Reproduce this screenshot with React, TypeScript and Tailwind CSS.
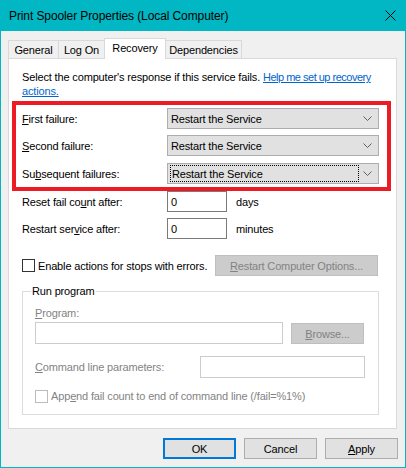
import React from "react";

const U = ({ children }: { children: React.ReactNode }) => (
  <span className="underline underline-offset-[1px]">{children}</span>
);

const Chevron = () => (
  <svg width="9" height="5" viewBox="0 0 9 5" className="shrink-0">
    <path d="M0.5 0.5 L4.5 4.5 L8.5 0.5" fill="none" stroke="#5f5f5f" strokeWidth="1" />
  </svg>
);

const Combo = ({ focused }: { focused?: boolean }) => (
  <div className="w-[212px] h-[21px] bg-[#e1e1e1] border border-[#adadad] flex items-center justify-between pr-[6px]">
    {focused ? (
      <div className="ml-[2px] w-[189px] h-[17px] border border-dotted border-black flex items-center pl-[1px]">
        Restart the Service
      </div>
    ) : (
      <div className="pl-[3px]">Restart the Service</div>
    )}
    <Chevron />
  </div>
);

const Tab = ({ label, w, selected, first }: { label: string; w: string; selected?: boolean; first?: boolean }) => (
  <div
    className={
      (selected
        ? "relative z-10 h-[21px] -mb-px bg-white pt-[2px] "
        : "h-[18px] bg-[#f0f0f0] pt-[2px] ") +
      (first ? "" : "-ml-px ") +
      "border-t border-l border-r border-[#d9d9d9] flex justify-center " +
      w
    }
  >
    {label}
  </div>
);

const Btn = ({ children, primary }: { children: React.ReactNode; primary?: boolean }) => (
  <div
    className={
      "w-[73px] h-[21px] bg-[#e1e1e1] flex items-center justify-center " +
      (primary ? "border-2 border-[#0078d7]" : "border border-[#adadad]")
    }
  >
    {children}
  </div>
);

export default function App() {
  return (
    <div className="w-[406px] h-[468px] bg-[#f0f0f0] border-x border-b border-[#00b7c3] font-['Liberation_Sans',Arial,sans-serif] text-[11px] leading-[14px] tracking-[-0.15px] text-black flex flex-col">
      <div className="h-[31px] shrink-0 bg-[#00b7c3] flex items-center justify-between pl-[8px] pr-[9px] text-[12px] tracking-[-0.1px]">
        <span>Print Spooler Properties (Local Computer)</span>
        <svg width="11" height="11" viewBox="0 0 11 11">
          <path d="M0.5 0.5 L10.5 10.5 M10.5 0.5 L0.5 10.5" stroke="#000" strokeWidth="1" />
        </svg>
      </div>

      <div className="h-[27px] shrink-0 flex items-end pl-[7px]">
        <Tab label="General" w="w-[51px]" first />
        <Tab label="Log On" w="w-[47px]" />
        <Tab label="Recovery" w="w-[62px]" selected />
        <Tab label="Dependencies" w="w-[77px]" />
      </div>

      <div className="ml-[7px] w-[389px] h-[371px] shrink-0 bg-white border border-[#d9d9d9] flex flex-col">
        <div className="pl-[13px] pt-[11px]">
          Select the computer's response if this service fails.{" "}
          <span className="text-[#0066cc] underline underline-offset-[1px] tracking-[-0.5px]">Help me set up recovery</span>
          <br />
          <span className="text-[#0066cc] underline underline-offset-[1px]">actions.</span>
        </div>

        <div className="mt-[3px] ml-[3px] w-[379px] border-4 border-[#ed1c24] pt-[3px] pb-[3px] pl-[6px] flex flex-col gap-[6px]">
          <div className="flex items-center">
            <div className="w-[145px]">
              <U>F</U>irst failure:
            </div>
            <Combo />
          </div>
          <div className="flex items-center">
            <div className="w-[145px]">
              <U>S</U>econd failure:
            </div>
            <Combo />
          </div>
          <div className="flex items-center mt-px">
            <div className="w-[145px]">
              Su<U>b</U>sequent failures:
            </div>
            <Combo focused />
          </div>
        </div>

        <div className="pl-[13px] flex items-center">
          <div className="w-[145px]">
            Reset fail co<U>u</U>nt after:
          </div>
          <div className="w-[60px] h-[21px] border border-[#7a7a7a] flex items-center pl-[3px]">0</div>
          <div className="ml-[9px]">days</div>
        </div>
        <div className="mt-[6px] pl-[13px] flex items-center">
          <div className="w-[145px]">
            Restart ser<U>v</U>ice after:
          </div>
          <div className="w-[60px] h-[21px] border border-[#7a7a7a] flex items-center pl-[3px]">0</div>
          <div className="ml-[9px]">minutes</div>
        </div>

        <div className="mt-[16px] pl-[13px] pr-[18px] flex items-center">
          <div className="w-[13px] h-[13px] border border-[#333333] bg-white" />
          <div className="ml-[3px]">Enable actions for stops with errors.</div>
          <div className="ml-auto w-[163px] h-[21px] bg-[#cccccc] border border-[#bfbfbf] text-[#838383] flex items-center justify-center">
            <span>
              <U>R</U>estart Computer Options...
            </span>
          </div>
        </div>

        <div className="relative mt-[15px] ml-[13px] w-[357px] border border-[#dcdcdc] pl-[12px] pt-[14px] pb-[11px]">
          <div className="absolute -top-[8px] left-[8px] bg-white px-px">Run program</div>
          <div className="text-[#838383]">
            <U>P</U>rogram:
          </div>
          <div className="mt-[2px] flex items-start">
            <div className="w-[248px] h-[22px] border border-[#cccccc] bg-white" />
            <div className="ml-[8px] mt-px w-[73px] h-[21px] bg-[#cccccc] border border-[#bfbfbf] text-[#838383] flex items-center justify-center">
              <span>
                <U>B</U>rowse...
              </span>
            </div>
          </div>
          <div className="mt-[12px] flex items-center">
            <div className="w-[165px] text-[#838383]">
              <U>C</U>ommand line parameters:
            </div>
            <div className="w-[165px] h-[22px] border border-[#cccccc] bg-white" />
          </div>
          <div className="mt-[11px] flex items-center">
            <div className="w-[13px] h-[13px] border border-[#bcbcbc] bg-white" />
            <div className="ml-[3px] text-[#838383]">
              App<U>e</U>nd fail count to end of command line (/fail=%1%)
            </div>
          </div>
        </div>
      </div>

      <div className="mt-[9px] pr-[7px] flex justify-end gap-[8px]">
        <Btn primary>OK</Btn>
        <Btn>Cancel</Btn>
        <Btn>
          <span>
            <U>A</U>pply
          </span>
        </Btn>
      </div>
    </div>
  );
}
